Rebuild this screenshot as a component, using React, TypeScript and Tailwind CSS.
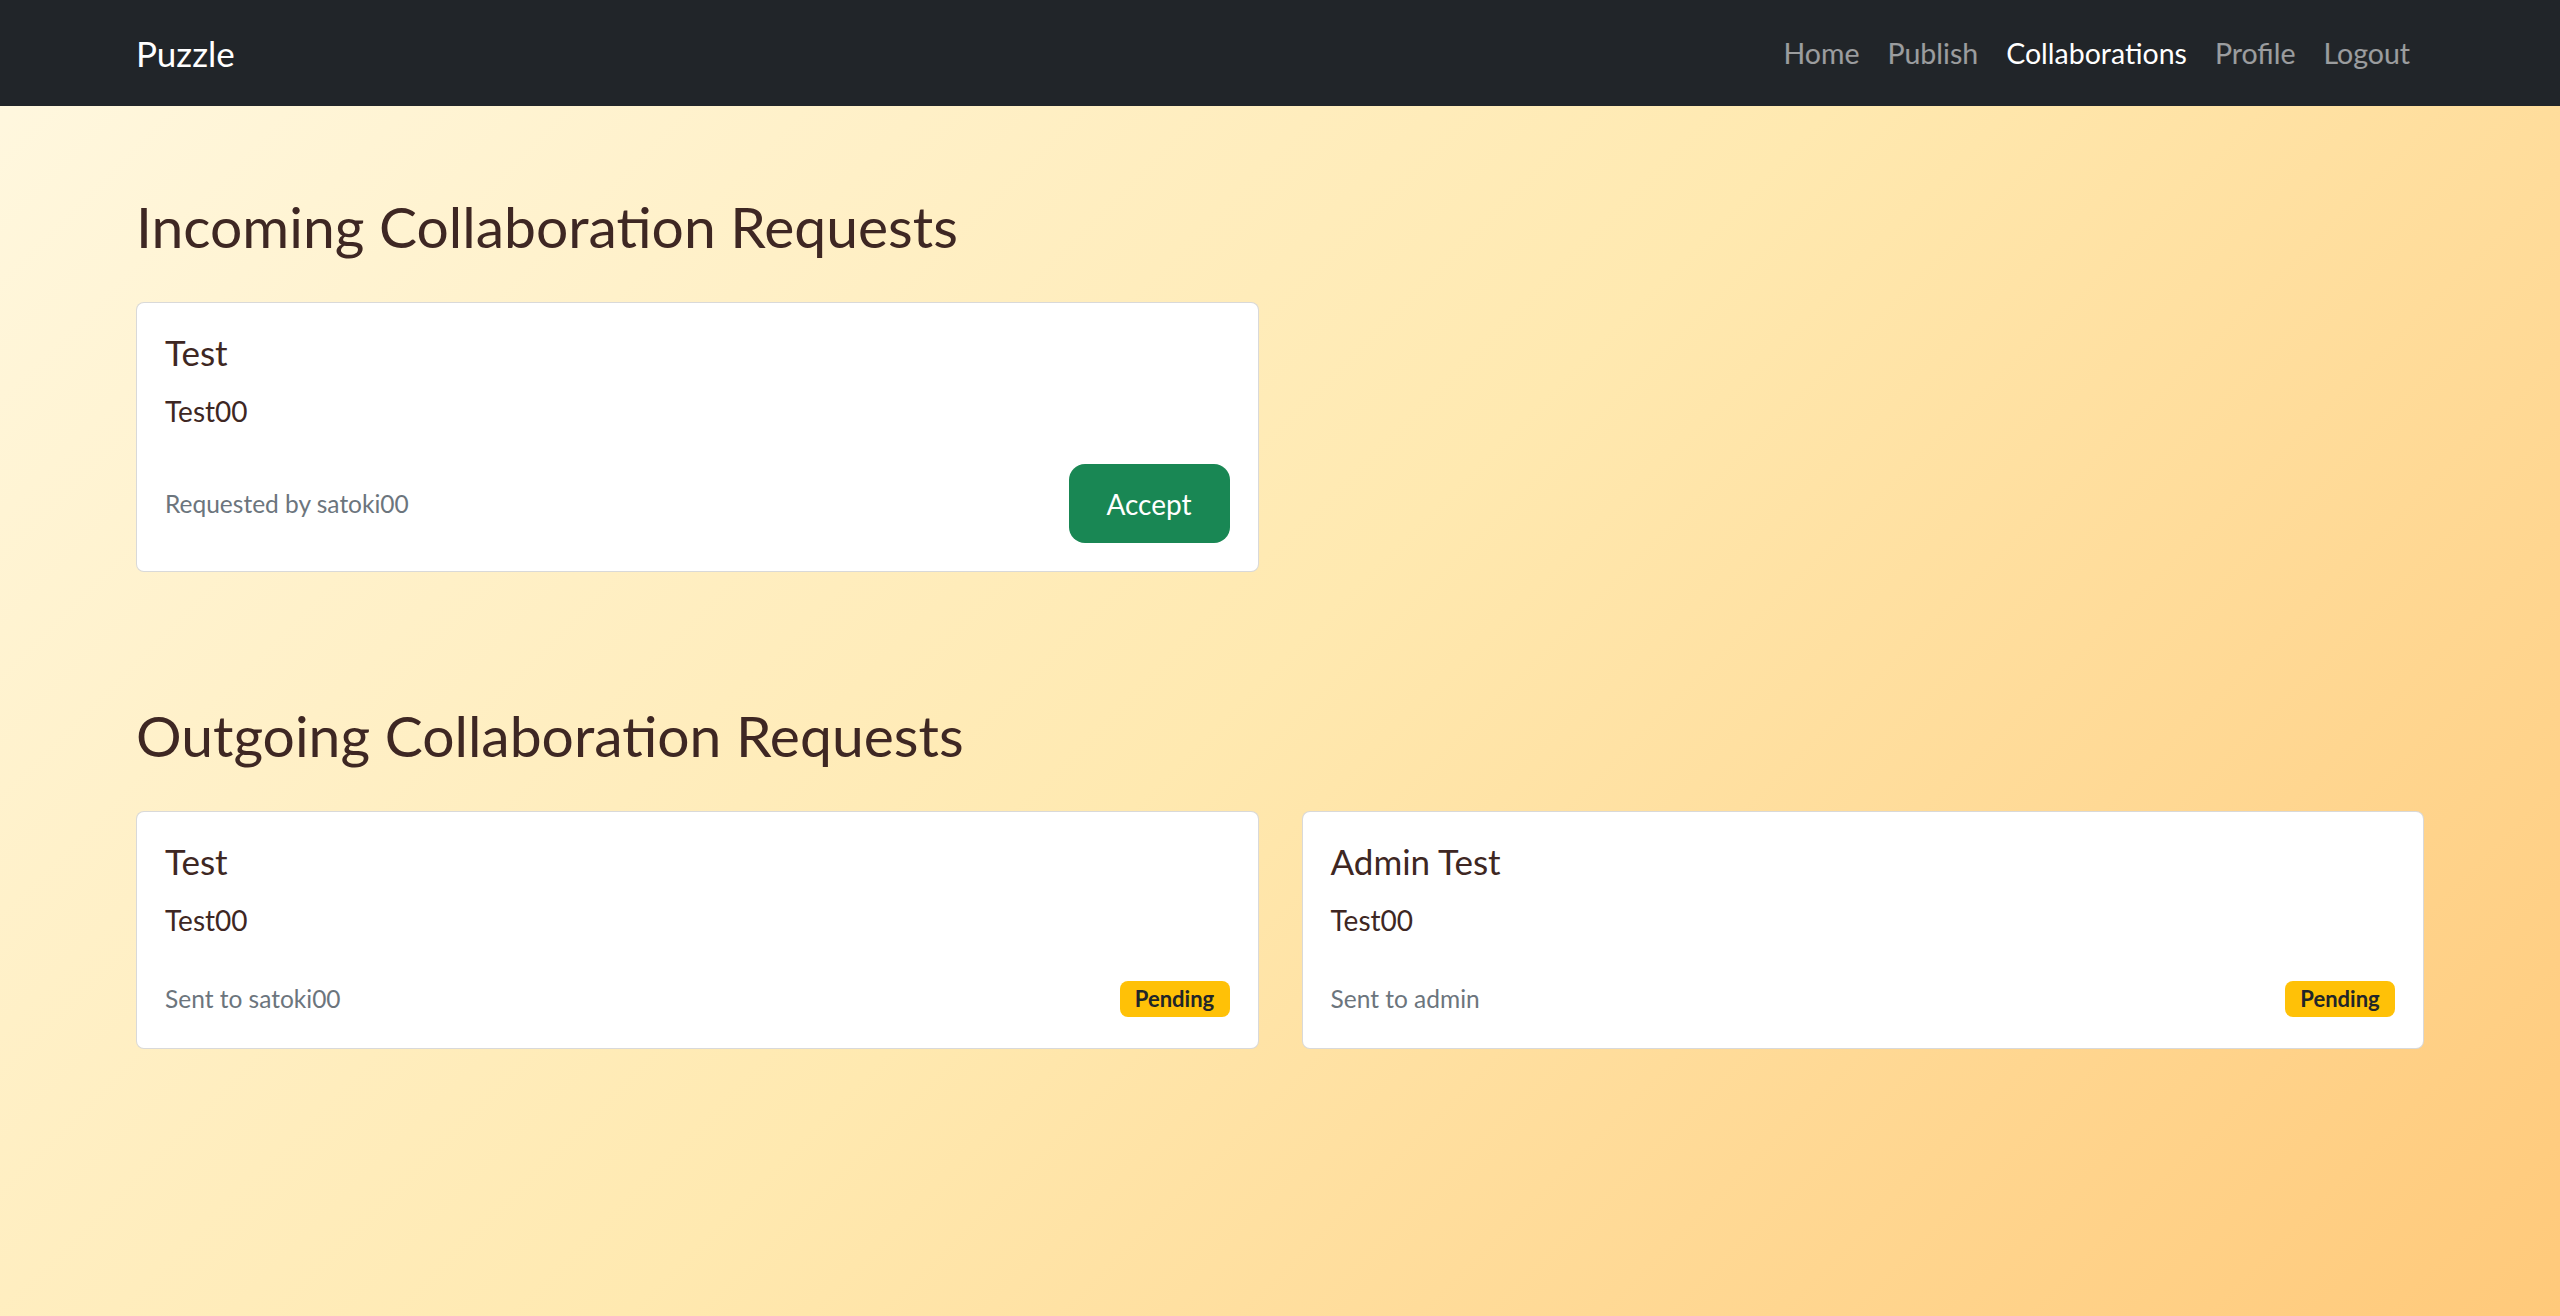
import React from "react";

interface Request {
  id: number;
  title: string;
  text: string;
  user: string;
}

const incoming: Request[] = [{ id: 1, title: "Test", text: "Test00", user: "satoki00" }];

const outgoing: Request[] = [
  { id: 2, title: "Test", text: "Test00", user: "satoki00" },
  { id: 3, title: "Admin Test", text: "Test00", user: "admin" },
];

const navLinks = [
  { label: "Home", active: false },
  { label: "Publish", active: false },
  { label: "Collaborations", active: true },
  { label: "Profile", active: false },
  { label: "Logout", active: false },
];

function Navbar() {
  return (
    <nav className="h-[106px] bg-[#212529]">
      <div className="mx-auto flex h-full max-w-[2288px] items-center justify-between">
        <a className="text-[35px] leading-[42px] text-white">Puzzle</a>
        <ul className="flex items-center">
          {navLinks.map((l) => (
            <li key={l.label}>
              <a
                className={
                  l.active
                    ? "block px-[14px] text-[28.5px] leading-[42px] text-white"
                    : "block px-[14px] text-[28.5px] leading-[42px] text-white/55"
                }
              >
                {l.label}
              </a>
            </li>
          ))}
        </ul>
      </div>
    </nav>
  );
}

function CardShell({ item, children }: { item: Request; children: React.ReactNode }) {
  return (
    <div className="rounded-[8px] border border-black/15 bg-white p-[28px]">
      <h5 className="mb-[17px] text-[35px] leading-[42px] text-[#3e2723]">{item.title}</h5>
      <p className="text-[28px] leading-[42px] text-[#3e2723]">{item.text}</p>
      {children}
    </div>
  );
}

export default function App() {
  return (
    <div
      className="min-h-screen bg-[linear-gradient(135deg,#fff8e1_0%,#ffe9b0_50%,#ffc97a_100%)] text-[#3e2723]"
      style={{ fontFamily: "Lato, 'Open Sans', sans-serif" }}
    >
      <Navbar />

      <main className="mx-auto max-w-[2288px] pt-[87px]">
        <section>
          <h2 className="mb-[42px] text-[57px] leading-[67px]">Incoming Collaboration Requests</h2>
          <div className="grid grid-cols-2 gap-x-[43px]">
            {incoming.map((r) => (
              <CardShell key={r.id} item={r}>
                <div className="mt-[32px] flex items-center justify-between">
                  <small className="text-[24.5px] leading-[37px] text-[#6c757d]">
                    Requested by {r.user}
                  </small>
                  <button className="h-[79px] w-[161px] rounded-[16px] bg-[#198754] text-[28px] text-white">
                    Accept
                  </button>
                </div>
              </CardShell>
            ))}
          </div>
        </section>

        <section className="mt-[130px]">
          <h2 className="mb-[42px] text-[57px] leading-[67px]">Outgoing Collaboration Requests</h2>
          <div className="grid grid-cols-2 gap-x-[43px]">
            {outgoing.map((r) => (
              <CardShell key={r.id} item={r}>
                <div className="mb-[3px] mt-[39px] flex h-[37px] items-center justify-between">
                  <small className="text-[24.5px] leading-[37px] text-[#6c757d]">Sent to {r.user}</small>
                  <span className="flex h-[36px] w-[110px] items-center justify-center rounded-[8px] bg-[#ffc107] text-[22px] font-bold text-[#212529]">
                    Pending
                  </span>
                </div>
              </CardShell>
            ))}
          </div>
        </section>
      </main>
    </div>
  );
}
